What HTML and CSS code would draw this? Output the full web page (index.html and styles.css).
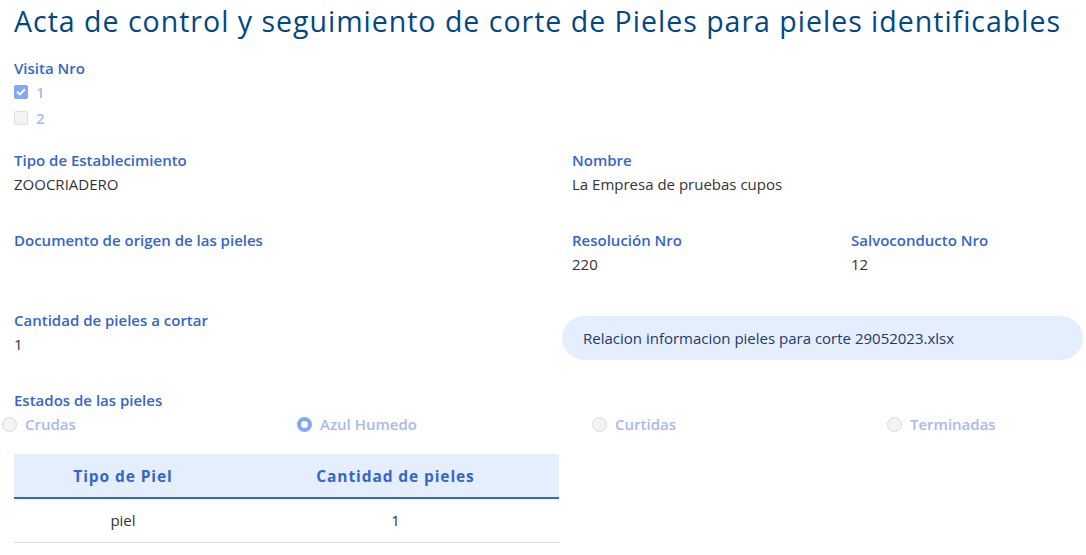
FILE: index.html
```html
<!DOCTYPE html>
<html lang="es">
<head>
<meta charset="utf-8">
<title>Acta de control</title>
<link rel="stylesheet" href="styles.css">
</head>
<body>
<main class="page">
  <h1 class="title">Acta de control y seguimiento de corte de Pieles para pieles identificables</h1>

  <section class="visit">
    <div class="label">Visita Nro</div>
    <div class="check-list">
      <div class="check"><span class="box checked"><svg viewBox="0 0 14 14" width="14" height="14"><polyline points="3.6,7.2 6,9.4 10.4,4.8" fill="none" stroke="#fff" stroke-width="2" stroke-linecap="round" stroke-linejoin="round"/></svg></span><span class="opt">1</span></div>
      <div class="check"><span class="box"></span><span class="opt">2</span></div>
    </div>
  </section>

  <div class="row">
    <div class="field"><div class="label">Tipo de Establecimiento</div><div class="value">ZOOCRIADERO</div></div>
    <div class="field span2"><div class="label">Nombre</div><div class="value">La Empresa de pruebas cupos</div></div>
  </div>

  <div class="row">
    <div class="field"><div class="label">Documento de origen de las pieles</div><div class="value"></div></div>
    <div class="field"><div class="label">Resolución Nro</div><div class="value">220</div></div>
    <div class="field"><div class="label">Salvoconducto Nro</div><div class="value">12</div></div>
  </div>

  <div class="row row-last">
    <div class="field"><div class="label">Cantidad de pieles a cortar</div><div class="value">1</div></div>
    <div class="field span2 file-cell"><div class="pill">Relacion informacion pieles para corte 29052023.xlsx</div></div>
  </div>

  <section class="states">
    <div class="label">Estados de las pieles</div>
    <div class="radio-row">
      <div class="radio"><span class="circle"></span><span class="opt">Crudas</span></div>
      <div class="radio"><span class="circle on"></span><span class="opt">Azul Humedo</span></div>
      <div class="radio"><span class="circle"></span><span class="opt">Curtidas</span></div>
      <div class="radio"><span class="circle"></span><span class="opt">Terminadas</span></div>
    </div>
  </section>

  <table class="grid">
    <thead>
      <tr class="head-row"><th class="c1">Tipo de Piel</th><th class="c2">Cantidad de pieles</th></tr>
    </thead>
    <tbody>
      <tr class="body-row"><td>piel</td><td>1</td></tr>
    </tbody>
  </table>
</main>
</body>
</html>
```

FILE: styles.css
```css
html, body {
  margin: 0;
  padding: 0;
  background: #ffffff;
  overflow: hidden;
}

body {
  font-family: "Open Sans", "Noto Sans", sans-serif;
  color: #333333;
  font-size: 15px;
}

.page {
  width: 1086px;
  overflow: hidden;
}

.title {
  margin: 0;
  padding: 2px 14px 0;
  font-family: "Open Sans", sans-serif;
  font-weight: 400;
  font-size: 28.5px;
  letter-spacing: 1px;
  line-height: 38px;
  color: #004884;
  white-space: nowrap;
}

.label {
  color: #3366cc;
  font-weight: 600;
  font-size: 15px;
  line-height: 24px;
}

.value {
  color: #333333;
  font-size: 15px;
  line-height: 24px;
  min-height: 24px;
}

.visit {
  margin-top: 17px;
  padding-left: 14px;
}

.visit .label {
  line-height: 22px;
}

.check {
  display: flex;
  align-items: center;
  height: 26px;
  gap: 8px;
}

.box {
  width: 14px;
  height: 14px;
  box-sizing: border-box;
  border-radius: 2px;
  background: #f2f3f5;
  border: 1px solid #dcdfe4;
  display: flex;
}

.box.checked {
  background: #7fa8f5;
  border-color: #7fa8f5;
}

.box.checked svg {
  margin: -1px;
}

.opt {
  color: #a6bbea;
  font-size: 15px;
  font-weight: 600;
}

.row {
  display: grid;
  grid-template-columns: 558px 279px 249px;
  margin-top: 17px;
}

.row + .row {
  margin-top: 32px;
}

.field {
  padding: 0 14px;
}

.span2 {
  grid-column: span 2;
}

.file-cell {
  padding: 8px 3px 0 4px;
}

.pill {
  height: 44px;
  border-radius: 22px;
  background: #e5eefc;
  color: #1b3a6a;
  font-size: 15px;
  display: flex;
  align-items: center;
  padding-left: 21px;
}

.states {
  margin-top: 28px;
}

.states .label {
  padding-left: 14px;
}

.radio-row {
  display: grid;
  grid-template-columns: repeat(4, 295px);
  padding-left: 2px;
  height: 24px;
}

.radio {
  display: flex;
  align-items: center;
  gap: 8px;
}

.circle {
  width: 15px;
  height: 15px;
  box-sizing: border-box;
  border-radius: 50%;
  background: #f2f3f5;
  border: 1px solid #d7dbe1;
}

.circle.on {
  background: #ffffff;
  border: 4px solid #7fa8f5;
}

.grid {
  margin: 18px 0 0 14px;
  width: 545px;
  border-collapse: collapse;
}

.head-row {
  height: 44px;
}

.grid th {
  background: #e5eefc;
  color: #3366cc;
  font-family: "Open Sans", sans-serif;
  font-weight: 700;
  font-size: 15.5px;
  letter-spacing: 0.9px;
  border-bottom: 2px solid #3366cc;
  text-align: center;
  padding: 0;
}

.grid .c1 {
  width: 40%;
}

.body-row {
  height: 44px;
}

.grid td {
  text-align: center;
  border-bottom: 1px solid #dddddd;
  color: #333333;
  font-size: 15px;
  padding: 0;
}
```
